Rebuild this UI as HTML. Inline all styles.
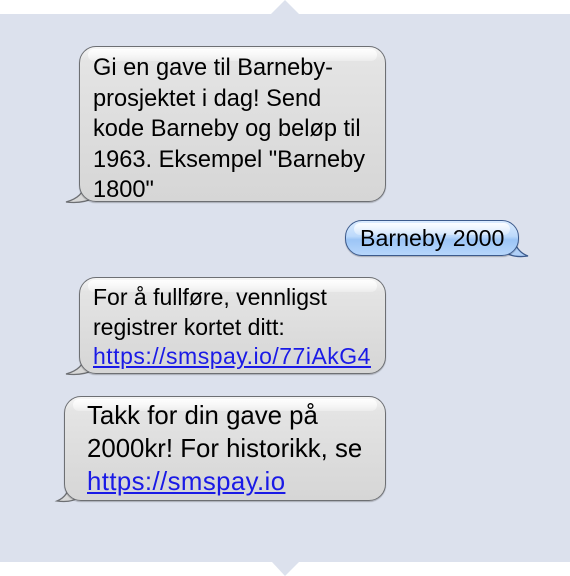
<!DOCTYPE html>
<html><head><meta charset="utf-8"><style>
html,body{margin:0;padding:0;background:#fff;}
body{width:570px;height:576px;position:relative;overflow:hidden;font-family:"Liberation Sans",Arial,sans-serif;}
.bg{position:absolute;left:0;top:14px;width:570px;height:548px;background:#dce1ed;}
.b{position:absolute;box-sizing:border-box;border:1.5px solid #6d6f73;border-radius:17px;background:linear-gradient(#f6f6f6 0,#e4e4e4 14px,#dcdcdc 60%,#d6d6d6 100%);color:#000;box-shadow:0 1px 1px rgba(0,0,0,.25);white-space:nowrap;}
.b:before{content:"";position:absolute;left:8px;right:8px;top:2px;height:12px;border-radius:10px;background:linear-gradient(rgba(255,255,255,.9),rgba(255,255,255,.3));}
.t{position:relative;}
a{color:#1a1ae6;text-decoration:underline;}
.blue{border-color:#3c5a8c;background:linear-gradient(#dcecff 0,#bcd9fb 45%,#9cc5f6 55%,#b7d6fb 100%);}
svg{position:absolute;}
</style></head><body>
<div class="bg"></div>
<svg style="left:0;top:0" width="570" height="576">
<polygon points="271,14 285,0 299,14" fill="#dce1ed"/>
<polygon points="272,562 285,576 299,562" fill="#dce1ed"/>
<path d="M84,184 Q84,197 66,202 Q82,204 94,198 Z" fill="#d8d8d8" stroke="#6d6f73" stroke-width="1.3"/>
<path d="M84,356 Q84,369 66,374 Q82,376 94,370 Z" fill="#d8d8d8" stroke="#6d6f73" stroke-width="1.3"/>
<path d="M69,483 Q69,496 57,501 Q71,503 80,497 Z" fill="#d8d8d8" stroke="#6d6f73" stroke-width="1.3"/>
<path d="M514,240 Q517,252 528,256 Q515,258 506,253 Z" fill="#b0d0f8" stroke="#3c5a8c" stroke-width="1.3"/>
</svg>
<div class="b" style="left:79px;top:46px;width:307px;height:156px;padding:6px 0 0 13px;font-size:23.6px;line-height:30.5px;"><div class="t">Gi en gave til Barneby-<br>prosjektet i dag! Send<br>kode Barneby og beløp til<br>1963. Eksempel "Barneby<br>1800"</div></div>
<div class="b blue" style="left:345px;top:220px;width:174px;height:36px;padding:4px 0 0 14px;font-size:23.2px;line-height:27px;"><div class="t">Barneby 2000</div></div>
<div class="b" style="left:79px;top:277px;width:307px;height:97px;padding:5px 0 0 13px;font-size:23px;line-height:29.5px;"><div class="t">For å fullføre, vennligst<br>registrer kortet ditt:<br><a style="letter-spacing:0.5px">https://smspay.io/77iAkG4</a></div></div>
<div class="b" style="left:64px;top:396px;width:322px;height:105px;padding:3px 0 0 22px;font-size:25.8px;line-height:33px;"><div class="t">Takk for din gave på<br>2000kr! For historikk, se<br><a style="letter-spacing:0.4px">https://smspay.io</a></div></div>
</body></html>
